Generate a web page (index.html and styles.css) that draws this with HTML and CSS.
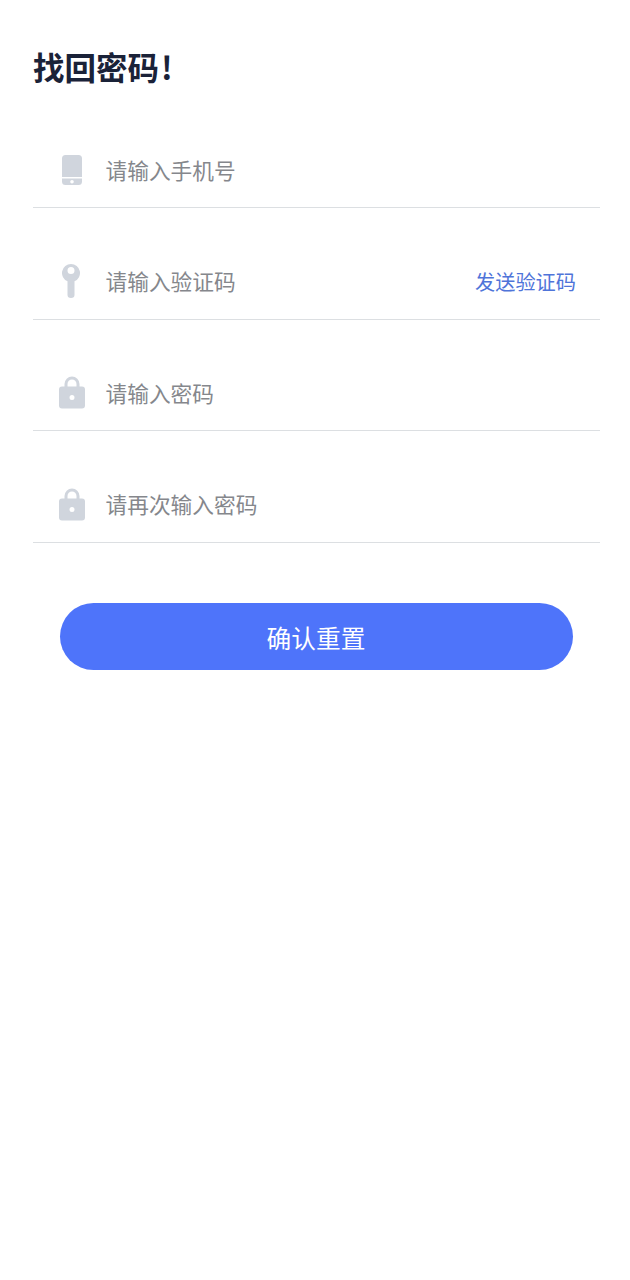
FILE: index.html
```html
<!DOCTYPE html>
<html>
<head>
  <title>找回密码</title>
  <link rel="stylesheet" href="styles.css">
</head>
<body>
  <div class="container">
    <h1 class="title">找回密码<span class="title-mark">!</span></h1>

    <div class="form">
      <div class="field">
        <svg class="icon" viewBox="0 0 26 34">
          <path d="M6.500 3H19.500A3.500 3.500 0 0 1 23 6.500V25H3V6.500A3.500 3.500 0 0 1 6.500 3Z"/>
          <path fill-rule="evenodd" d="M3 26.500H23V29.500A3.500 3.500 0 0 1 19.500 33H6.500A3.500 3.500 0 0 1 3 29.500ZM13 28A1.800 1.800 0 1 0 13 31.600A1.800 1.800 0 1 0 13 28Z"/>
        </svg>
        <span class="placeholder">请输入手机号</span>
      </div>

      <div class="field">
        <svg class="icon" viewBox="0 0 26 34">
          <path fill-rule="evenodd" d="M12 0A9 9 0 0 1 15.500 17.300V31A3.500 3 0 0 1 8.500 31V17.300A9 9 0 0 1 12 0ZM12 3A3.500 3.500 0 1 0 12 10A3.500 3.500 0 1 0 12 3Z"/>
        </svg>
        <span class="placeholder">请输入验证码</span>
        <a class="send-code">发送验证码</a>
      </div>

      <div class="field">
        <svg class="icon" viewBox="0 -0.500 26 34">
          <path fill-rule="evenodd" d="M5.500 11V8.500A7.500 7.500 0 0 1 20.500 8.500V11H23A3 3 0 0 1 26 14V30A3 3 0 0 1 23 33H3A3 3 0 0 1 0 30V14A3 3 0 0 1 3 11ZM8.500 11H17.500V8.500A4.500 4.500 0 0 0 8.500 8.500ZM13 19.500A2.500 2.500 0 1 0 13 24.500A2.500 2.500 0 1 0 13 19.500Z"/>
        </svg>
        <span class="placeholder">请输入密码</span>
      </div>

      <div class="field">
        <svg class="icon" viewBox="0 -0.500 26 34">
          <path fill-rule="evenodd" d="M5.500 11V8.500A7.500 7.500 0 0 1 20.500 8.500V11H23A3 3 0 0 1 26 14V30A3 3 0 0 1 23 33H3A3 3 0 0 1 0 30V14A3 3 0 0 1 3 11ZM8.500 11H17.500V8.500A4.500 4.500 0 0 0 8.500 8.500ZM13 19.500A2.500 2.500 0 1 0 13 24.500A2.500 2.500 0 1 0 13 19.500Z"/>
        </svg>
        <span class="placeholder">请再次输入密码</span>
      </div>
    </div>

    <button class="submit">确认重置</button>
  </div>
</body>
</html>
```

FILE: styles.css
```css
:root {
  --primary: #4e74fa;
  --link: #4f74d9;
  --title: #1a2238;
  --placeholder: #85878c;
  --icon: #d0d5dd;
  --border: #dcdfe2;
}

body {
  margin: 0;
  background: #fff;
  font-family: "Noto Sans CJK SC", "Noto Sans", sans-serif;
}

.container {
  padding: 44px 30px 0 33px;
}

.title {
  margin: 0;
  font-size: 31.500px;
  line-height: 44px;
  font-weight: 700;
  color: var(--title);
}

.title-mark {
  margin-left: 2px;
}

.form {
  margin-top: 55px;
  display: flex;
  flex-direction: column;
  gap: 46.500px;
}

.field {
  display: flex;
  align-items: center;
  height: 52px;
  padding: 0 24px 12px 26px;
  border-bottom: 1px solid var(--border);
}

.icon {
  width: 26px;
  height: 34px;
  flex-shrink: 0;
  fill: var(--icon);
}

.placeholder {
  flex: 1;
  margin-left: 20.500px;
  font-size: 21.700px;
  color: var(--placeholder);
}

.send-code {
  padding-top: 1px;
  font-size: 20.200px;
  color: var(--link);
}

.submit {
  display: block;
  width: 513px;
  height: 67px;
  margin: 60px 0 0 26.500px;
  padding: 2px 0 0;
  border: none;
  border-radius: 34px;
  background: var(--primary);
  color: #fff;
  font-family: inherit;
  font-size: 24.700px;
}
```
